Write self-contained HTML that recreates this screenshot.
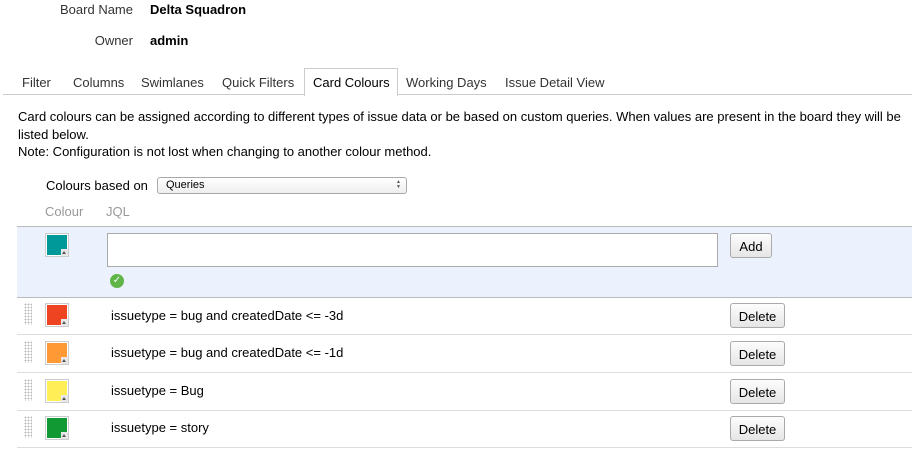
<!DOCTYPE html><html><head><style>
body{margin:0;width:912px;height:452px;overflow:hidden;background:#fff;font-family:"Liberation Sans",Arial,sans-serif;font-size:13px;color:#333;position:relative}
.a{position:absolute;white-space:nowrap}
.tab{position:absolute;top:75px;color:#333}
.sw{position:absolute;left:45px;width:22px;height:22px;border:1px solid #ccc;background:#fff}
.sw i{position:absolute;left:1px;top:1px;width:20px;height:20px}
.sw b{position:absolute;right:0;bottom:0;width:7px;height:7px;background:#e8e8e8}
.sw b:after{content:"";position:absolute;left:1px;top:2px;border-left:2.5px solid transparent;border-right:2.5px solid transparent;border-bottom:3px solid #555}
.btn{position:absolute;left:730px;height:23px;border:1px solid #aaa;border-radius:3px;background:linear-gradient(#fdfdfd,#e6e6e6);font-size:13px;color:#000;line-height:25px;text-align:center}
.row{position:absolute;left:17px;width:895px;height:37px;border-bottom:1px solid #ddd}
.grip{position:absolute;left:7px;top:6px;width:8px;height:22px;background-image:radial-gradient(#bbb 45%,transparent 50%);background-size:3px 3px}
</style></head><body>
<div class="a" style="right:779px;top:2px">Board Name</div><div class="a" style="left:150px;top:2px;font-weight:bold;color:#000">Delta Squadron</div>
<div class="a" style="right:779px;top:33px">Owner</div><div class="a" style="left:150px;top:33px;font-weight:bold;color:#000">admin</div>
<div class="a" style="left:3px;top:94px;width:909px;border-top:1px solid #ccc"></div>
<div class="tab" style="left:22px">Filter</div>
<div class="tab" style="left:73px">Columns</div>
<div class="tab" style="left:141px">Swimlanes</div>
<div class="tab" style="left:222px">Quick Filters</div>
<div class="a" style="left:304px;top:68px;width:92px;height:27px;border:1px solid #ccc;border-bottom:none;background:#fff"></div>
<div class="tab" style="left:313px;color:#000">Card Colours</div>
<div class="tab" style="left:406px">Working Days</div>
<div class="tab" style="left:505px">Issue Detail View</div>
<div class="a" style="left:18px;top:108px;line-height:17.5px;color:#000;white-space:normal;width:894px">Card colours can be assigned according to different types of issue data or be based on custom queries. When values are present in the board they will be listed below.<br>Note: Configuration is not lost when changing to another colour method.</div>
<div class="a" style="left:46px;top:178px;color:#000">Colours based on</div>
<div class="a" style="left:157px;top:177px;width:248px;height:15px;border:1px solid #aaa;border-radius:3px;background:linear-gradient(#fff,#eee);font-size:11px;line-height:15px;color:#000"><span style="margin-left:8px">Queries</span><span style="position:absolute;right:5px;top:2px;font-size:5px;line-height:5px;color:#555">&#9650;<br>&#9660;</span></div>
<div class="a" style="left:45px;top:204px;color:#999">Colour</div><div class="a" style="left:106px;top:204px;color:#999">JQL</div>
<div class="a" style="left:17px;top:226px;width:895px;height:70px;background:#ebf1fd;border-top:1px solid #bbb;border-bottom:1px solid #bbb"></div>
<div class="sw" style="top:233px"><i style="background:#009999"></i><b></b></div>
<div class="a" style="left:107px;top:233px;width:609px;height:32px;border:1px solid #aaa;background:#fff"></div>
<div class="btn" style="top:233px;width:40px">Add</div>
<div class="a" style="left:110px;top:274px;width:14px;height:14px;border-radius:50%;background:#5fb548;color:#fff;font-size:10px;line-height:14px;text-align:center">✓</div>
<div class="row" style="top:297px"><div class="grip"></div></div>
<div class="sw" style="top:303px"><i style="background:#ee4422"></i><b></b></div><div class="a" style="left:111px;top:308px;color:#000">issuetype = bug and createdDate &lt;= -3d</div><div class="btn" style="top:303px;width:53px">Delete</div>
<div class="row" style="top:335px"><div class="grip"></div></div>
<div class="sw" style="top:341px"><i style="background:#ff9933"></i><b></b></div><div class="a" style="left:111px;top:345px;color:#000">issuetype = bug and createdDate &lt;= -1d</div><div class="btn" style="top:341px;width:53px">Delete</div>
<div class="row" style="top:373px"><div class="grip"></div></div>
<div class="sw" style="top:379px"><i style="background:#ffee55"></i><b></b></div><div class="a" style="left:111px;top:383px;color:#000">issuetype = Bug</div><div class="btn" style="top:379px;width:53px">Delete</div>
<div class="row" style="top:410px"><div class="grip"></div></div>
<div class="sw" style="top:416px"><i style="background:#119933"></i><b></b></div><div class="a" style="left:111px;top:420px;color:#000">issuetype = story</div><div class="btn" style="top:416px;width:53px">Delete</div>
</body></html>
